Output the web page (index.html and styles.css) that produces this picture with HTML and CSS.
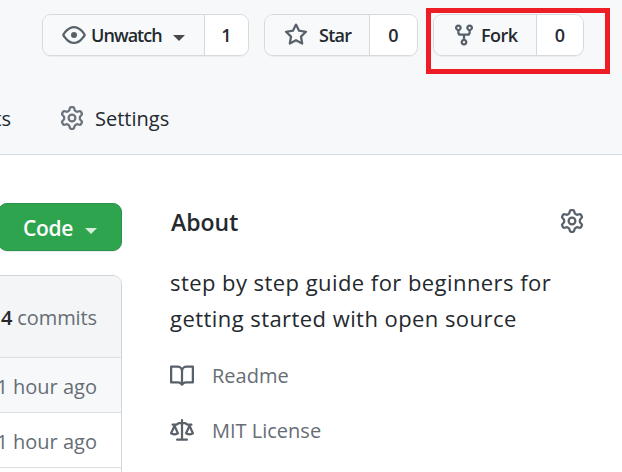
FILE: index.html
```
<!DOCTYPE html>
<html lang="en">
<head>
<meta charset="utf-8">
<title>Repository</title>
<link rel="stylesheet" href="styles.css">
</head>
<body>
<svg width="0" height="0" class="sprite">
<symbol id="eye" viewBox="0 0 16 16"><path fill-rule="evenodd" d="M1.679 7.932c.412-.621 1.242-1.75 2.366-2.717C5.175 4.242 6.527 3.5 8 3.5c1.473 0 2.824.742 3.955 1.715 1.124.967 1.954 2.096 2.366 2.717a.119.119 0 010 .136c-.412.621-1.242 1.75-2.366 2.717C10.825 11.758 9.473 12.5 8 12.5c-1.473 0-2.824-.742-3.955-1.715C2.92 9.818 2.09 8.69 1.679 8.068a.119.119 0 010-.136zM8 2c-1.981 0-3.67.992-4.933 2.078C1.797 5.169.88 6.423.43 7.1a1.619 1.619 0 000 1.798c.45.678 1.367 1.932 2.637 3.024C4.329 13.008 6.019 14 8 14c1.981 0 3.67-.992 4.933-2.078 1.27-1.091 2.187-2.345 2.637-3.023a1.619 1.619 0 000-1.798c-.45-.678-1.367-1.932-2.637-3.023C11.671 2.992 9.981 2 8 2zm0 8a2 2 0 100-4 2 2 0 000 4z"/></symbol>
<symbol id="star" viewBox="0 0 16 16"><path fill-rule="evenodd" d="M8 .25a.75.75 0 01.673.418l1.882 3.815 4.21.612a.75.75 0 01.416 1.279l-3.046 2.97.719 4.192a.75.75 0 01-1.088.791L8 12.347l-3.766 1.98a.75.75 0 01-1.088-.79l.72-4.194L.818 6.374a.75.75 0 01.416-1.28l4.21-.611L7.327.668A.75.75 0 018 .25zm0 2.445L6.615 5.5a.75.75 0 01-.564.41l-3.097.45 2.24 2.184a.75.75 0 01.216.664l-.528 3.084 2.769-1.456a.75.75 0 01.698 0l2.77 1.456-.53-3.084a.75.75 0 01.216-.664l2.24-2.183-3.096-.45a.75.75 0 01-.564-.41L8 2.694v.001z"/></symbol>
<symbol id="fork" viewBox="0 0 16 16"><path fill-rule="evenodd" d="M5 3.25a.75.75 0 11-1.5 0 .75.75 0 011.5 0zm0 2.122a2.25 2.25 0 10-1.5 0v.878A2.25 2.25 0 005.75 8.5h1.5v2.128a2.251 2.251 0 101.5 0V8.5h1.5a2.25 2.25 0 002.25-2.25v-.878a2.25 2.25 0 10-1.5 0v.878a.75.75 0 01-.75.75h-4.5A.75.75 0 015 6.25v-.878zm3.75 7.378a.75.75 0 11-1.5 0 .75.75 0 011.5 0zm3-8.75a.75.75 0 100-1.5.75.75 0 000 1.5z"/></symbol>
<symbol id="gear" viewBox="0 0 16 16"><path fill-rule="evenodd" d="M7.429 1.525a6.593 6.593 0 011.142 0c.036.003.108.036.137.146l.289 1.105c.147.56.55.967.997 1.189.174.086.341.183.501.29.417.278.97.423 1.53.27l1.102-.303c.11-.03.175.016.195.046.219.31.41.641.573.989.014.031.022.11-.059.19l-.815.806c-.411.406-.562.957-.53 1.456a4.588 4.588 0 010 .582c-.032.499.119 1.05.53 1.456l.815.806c.08.08.073.159.059.19a6.494 6.494 0 01-.573.99c-.02.029-.086.074-.195.045l-1.103-.303c-.559-.153-1.112-.008-1.529.27-.16.107-.327.204-.5.29-.449.222-.851.628-.998 1.189l-.289 1.105c-.029.11-.101.143-.137.146a6.613 6.613 0 01-1.142 0c-.036-.003-.108-.037-.137-.146l-.289-1.105c-.147-.56-.55-.967-.997-1.189a4.502 4.502 0 01-.501-.29c-.417-.278-.97-.423-1.53-.27l-1.102.303c-.11.03-.175-.016-.195-.046a6.492 6.492 0 01-.573-.989c-.014-.031-.022-.11.059-.19l.815-.806c.411-.406.562-.957.53-1.456a4.587 4.587 0 010-.582c.032-.499-.119-1.05-.53-1.456l-.815-.806c-.08-.08-.073-.159-.059-.19a6.44 6.44 0 01.573-.99c.02-.029.086-.075.195-.045l1.103.303c.559.153 1.112.008 1.529-.27.16-.107.327-.204.5-.29.449-.222.851-.628.998-1.189l.289-1.105c.029-.11.101-.143.137-.146zM8 0c-.236 0-.47.01-.701.03-.743.065-1.29.615-1.458 1.261l-.29 1.106c-.017.066-.078.158-.211.224a5.994 5.994 0 00-.668.386c-.123.082-.233.09-.3.071L3.27 2.776c-.644-.177-1.392.02-1.82.63a7.977 7.977 0 00-.704 1.217c-.315.675-.111 1.422.363 1.891l.815.806c.05.048.098.147.088.294a6.084 6.084 0 000 .772c.01.147-.038.246-.088.294l-.815.806c-.474.469-.678 1.216-.363 1.891.2.428.436.835.704 1.218.428.609 1.176.806 1.82.63l1.103-.303c.066-.019.176-.011.299.071.213.143.436.272.668.386.133.066.194.158.212.224l.289 1.106c.169.646.715 1.196 1.458 1.26a8.094 8.094 0 001.402 0c.743-.064 1.29-.614 1.458-1.26l.29-1.106c.017-.066.078-.158.211-.224a5.98 5.98 0 00.668-.386c.123-.082.233-.09.3-.071l1.102.302c.644.177 1.392-.02 1.82-.63.268-.382.505-.789.704-1.217.315-.675.111-1.422-.364-1.891l-.814-.806c-.05-.048-.098-.147-.088-.294a6.1 6.1 0 000-.772c-.01-.147.039-.246.088-.294l.814-.806c.475-.469.679-1.216.364-1.891a7.992 7.992 0 00-.704-1.218c-.428-.609-1.176-.806-1.82-.63l-1.103.303c-.066.019-.176.011-.299-.071a5.991 5.991 0 00-.668-.386c-.133-.066-.194-.158-.212-.224L10.16 1.29C9.99.645 9.444.095 8.701.031A8.094 8.094 0 008 0zm1.5 8a1.5 1.5 0 11-3 0 1.5 1.5 0 013 0zM11 8a3 3 0 11-6 0 3 3 0 016 0z"/></symbol>
<symbol id="book" viewBox="0 0 16 16"><path fill-rule="evenodd" d="M0 1.75A.75.75 0 01.75 1h4.253c1.227 0 2.317.59 3 1.501A3.744 3.744 0 0111.006 1h4.245a.75.75 0 01.75.75v10.5a.75.75 0 01-.75.75h-4.507a2.25 2.25 0 00-1.591.659l-.622.621a.75.75 0 01-1.06 0l-.622-.621A2.25 2.25 0 005.258 13H.75a.75.75 0 01-.75-.75V1.75zm8.755 3a2.25 2.25 0 012.25-2.25H14.5v9h-3.757c-.71 0-1.4.201-1.992.572l.004-7.322zm-1.504 7.324l.004-5.073-.002-2.253A2.25 2.25 0 005.003 2.5H1.5v9h3.757a3.75 3.75 0 011.994.574z"/></symbol>
<symbol id="law" viewBox="0 0 16 16"><path fill-rule="evenodd" d="M8.75.75a.75.75 0 00-1.5 0V2h-.984c-.305 0-.604.08-.869.23l-1.288.737A.25.25 0 013.984 3H1.75a.75.75 0 000 1.5h.428L.066 9.192a.75.75 0 00.154.838l.53-.53-.53.53v.001l.002.002.002.002.006.006.016.015.045.04a3.514 3.514 0 00.686.45A4.492 4.492 0 003 11c.88 0 1.556-.22 2.023-.454a3.515 3.515 0 00.686-.45l.045-.04.016-.015.006-.006.002-.002.001-.002L5.25 9.5l.53.53a.75.75 0 00.154-.838L3.822 4.5h.162c.305 0 .604-.08.869-.23l1.289-.737a.25.25 0 01.124-.033h.984V13h-2.5a.75.75 0 000 1.5h6.5a.75.75 0 000-1.5h-2.5V3.5h.984a.25.25 0 01.124.033l1.29.736c.264.152.563.231.868.231h.162l-2.112 4.692a.75.75 0 00.154.838l.53-.53-.53.53v.001l.002.002.002.002.006.006.016.015.045.04a3.517 3.517 0 00.686.45A4.492 4.492 0 0013 11c.88 0 1.556-.22 2.023-.454a3.512 3.512 0 00.686-.45l.045-.04.01-.01.006-.005.006-.006.002-.002.001-.002-.529-.531.53.53a.75.75 0 00.154-.838L13.823 4.5h.427a.75.75 0 000-1.5h-2.234a.25.25 0 01-.124-.033l-1.29-.736A1.75 1.75 0 009.735 2H8.75V.75zM1.695 9.227c.285.135.718.273 1.305.273s1.02-.138 1.305-.273L3 6.327l-1.305 2.9zm10 0c.285.135.718.273 1.305.273s1.02-.138 1.305-.273L13 6.327l-1.305 2.9z"/></symbol>
</svg>
<header class="top">
  <div class="actions">
    <div class="btn watch"><span class="main"><svg class="icon"><use href="#eye"/></svg><span class="label">Unwatch</span><i class="caret"></i></span><span class="count">1</span></div>
    <div class="btn stars"><span class="main"><svg class="icon"><use href="#star"/></svg><span class="label">Star</span></span><span class="count">0</span></div>
    <div class="btn forks"><span class="main"><svg class="icon"><use href="#fork"/></svg><span class="label">Fork</span></span><span class="count">0</span></div>
  </div>
  <nav class="tabs">
    <span class="tab cut">ts</span>
    <svg class="icon"><use href="#gear"/></svg><span class="tab settings">Settings</span>
  </nav>
  <div class="highlight"></div>
</header>
<main class="content">
  <section class="files">
    <button class="code"><span>Code</span><i class="caret"></i></button>
    <div class="list">
      <div class="row commits"><b>4</b> commits</div>
      <div class="row shaded">1 hour ago</div>
      <div class="row">1 hour ago</div>
      <div class="row"></div>
    </div>
  </section>
  <aside class="about">
    <div class="heading"><h2>About</h2><svg class="icon"><use href="#gear"/></svg></div>
    <p><span class="line">step by step guide for beginners for</span> <span class="line">getting started with open source</span></p>
    <div class="link readme"><svg class="icon"><use href="#book"/></svg><span>Readme</span></div>
    <div class="link license"><svg class="icon"><use href="#law"/></svg><span>MIT License</span></div>
  </aside>
</main>
</body>
</html>
```
FILE: styles.css
```
* { box-sizing: border-box; }
body { margin: 0; width: 622px; height: 472px; overflow: hidden; background: #fff; color: #24292e; font-family: "Open Sans", "Noto Sans", sans-serif; font-size: 20px; }
.sprite { position: absolute; }
.icon { width: 24px; height: 24px; fill: #586069; flex: none; }
.top { position: relative; height: 155px; padding-top: 14px; background: #f6f8fa; border-bottom: 1px solid #d5dae0; }
.actions { display: flex; gap: 15px; padding-left: 42px; }
.btn { display: flex; height: 42px; border: 1px solid #d7dadd; border-radius: 9px; overflow: hidden; font-size: 18px; font-weight: 600; line-height: 40px; box-shadow: 0 1px 1px rgba(27,31,35,.05); }
.watch { width: 207px; }
.stars { width: 154px; }
.forks { width: 151px; }
.main { display: flex; align-items: center; flex: none; padding-left: 19px; white-space: nowrap; background: #f7f9fb; border-right: 1px solid #d7dadd; }
.main .icon { margin-bottom: 1px; }
.watch .main { width: 162px; }
.stars .main { width: 105px; }
.forks .main { width: 103px; padding-left: 18px; }
.label { margin-left: 5px; letter-spacing: -0.5px; }
.watch .label { width: 82px; letter-spacing: -0.95px; }
.stars .label { margin-left: 11px; letter-spacing: -0.7px; }
.count { flex: 1; text-align: center; background: #fff; font-size: 18px; }
.caret { width: 0; height: 0; border: 6px solid transparent; border-top-color: #44494e; border-bottom: 0; margin-top: 5px; flex: none; }
.highlight { position: absolute; left: 426px; top: 8px; width: 184px; height: 66px; border: 5px solid #ee1c25; }
.tabs { display: flex; align-items: center; height: 30px; margin-top: 47px; line-height: 30px; }
.tab { margin-top: 1px; }
.tabs .icon { fill: #6a737d; }
.cut { width: 11px; display: flex; justify-content: flex-end; margin-right: 49px; }
.settings { margin-left: 11px; }
.content { display: flex; }
.files { width: 122px; padding-top: 48px; }
.code { display: flex; align-items: center; width: 124px; height: 48px; margin: 0 0 0 -2px; padding: 2px 0 0 24px; border: 1px solid #2b9349; border-radius: 9px; background: #2ea44f; color: #fff; font: 600 21px "Open Sans", sans-serif; letter-spacing: -0.3px; box-shadow: 0 1px 1px rgba(27,31,35,.1); }
.code span { width: 62px; text-align: left; }
.code .caret { border-top-color: #d5edda; }
.list { height: 220px; margin: 24px 0 0 -10px; border: 1px solid #d1d5da; border-radius: 9px; overflow: hidden; color: #666d75; }
.row { height: 55px; border-bottom: 1px solid #dce0e4; padding-right: 24px; text-align: right; line-height: 57px; white-space: nowrap; }
.commits { height: 82px; line-height: 84px; background: #f3f5f7; letter-spacing: -0.1px; }
.commits b { font-weight: 600; color: #24292e; }
.shaded { background: #f6f8fa; }
.about { width: 414px; margin-left: 48px; padding-top: 48px; }
.heading { display: flex; justify-content: space-between; align-items: center; height: 38px; }
.heading .icon { margin-bottom: 3px; }
h2 { margin: 0 0 0 1px; font-size: 23px; font-weight: 600; line-height: 38px; }
p { margin: 23px 0 0; font-size: 22px; letter-spacing: 0.44px; line-height: 36px; }
.line { display: block; white-space: nowrap; }
.link { display: flex; align-items: center; height: 30px; margin-top: 25px; color: #666d75; }
.link span { margin: -2px 0 0 18px; }
```
